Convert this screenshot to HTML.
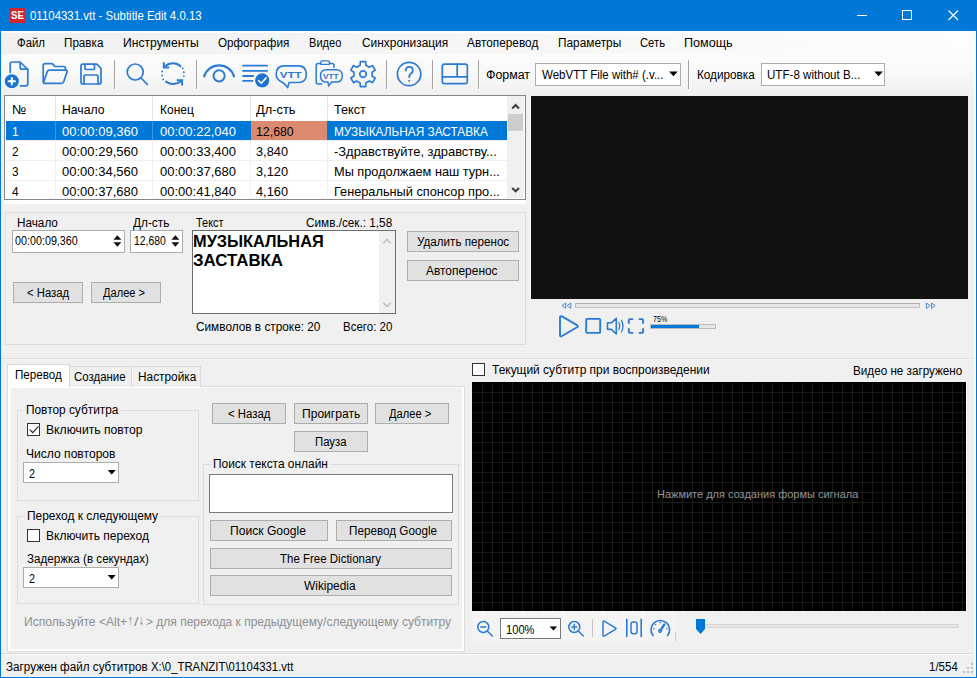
<!DOCTYPE html>
<html lang="ru"><head><meta charset="utf-8"><title>01104331.vtt - Subtitle Edit 4.0.13</title>
<style>
html,body{margin:0;padding:0;}
body{width:977px;height:678px;overflow:hidden;background:#f0f0f0;position:relative;font-family:"Liberation Sans",sans-serif;font-size:12px;color:#000;}
#win div{position:absolute;box-sizing:border-box;}
#win span.t{position:absolute;white-space:nowrap;transform-origin:0 50%;display:block;}
#win svg{position:absolute;overflow:visible;}
.btn{background:#e1e1e1;border:1px solid #adadad;}
.inp{background:#fff;border:1px solid #7a7a7a;}
</style></head><body><div id="win">
<div style="left:0px;top:0px;width:977px;height:678px;background:#f0f0f0;"></div>
<div style="left:0px;top:0px;width:977px;height:31px;background:#0078d7;"></div>
<div style="left:9.5px;top:7.5px;width:15.5px;height:15px;background:#d8232a;border-radius:1px;"></div>
<div style="left:857px;top:15px;width:10px;height:1px;background:#fff;"></div>
<div style="left:902px;top:10px;width:10px;height:10px;border:1px solid #fff;"></div>
<div style="left:1px;top:31px;width:975px;height:2px;background:#fdfdfd;"></div>
<div style="left:1px;top:33px;width:975px;height:21px;background:linear-gradient(90deg,#f0f0f0 0%,#f6f6f6 45%,#fdfdfd 100%);"></div>
<div style="left:1px;top:54px;width:975px;height:41px;background:linear-gradient(#fcfcfc 0%,#f8f8f8 50%,#f0f0f0 100%);"></div>
<div style="left:114px;top:60px;width:1px;height:29px;background:#a2a2a2;"></div>
<div style="left:115px;top:60px;width:1px;height:29px;background:#fdfdfd;"></div>
<div style="left:196px;top:60px;width:1px;height:29px;background:#a2a2a2;"></div>
<div style="left:197px;top:60px;width:1px;height:29px;background:#fdfdfd;"></div>
<div style="left:386px;top:60px;width:1px;height:29px;background:#a2a2a2;"></div>
<div style="left:387px;top:60px;width:1px;height:29px;background:#fdfdfd;"></div>
<div style="left:432px;top:60px;width:1px;height:29px;background:#a2a2a2;"></div>
<div style="left:433px;top:60px;width:1px;height:29px;background:#fdfdfd;"></div>
<div style="left:478px;top:60px;width:1px;height:29px;background:#a2a2a2;"></div>
<div style="left:479px;top:60px;width:1px;height:29px;background:#fdfdfd;"></div>
<div style="left:688px;top:60px;width:1px;height:29px;background:#a2a2a2;"></div>
<div style="left:689px;top:60px;width:1px;height:29px;background:#fdfdfd;"></div>
<div style="left:535px;top:63px;width:146px;height:23px;background:#fff;border:1px solid #adadad;"></div>
<div style="left:761px;top:63px;width:124px;height:23px;background:#fff;border:1px solid #adadad;"></div>
<div style="left:4px;top:95px;width:522px;height:105px;background:#fff;border:1px solid #868686;"></div>
<div style="left:6px;top:96px;width:501px;height:24px;background:#fff;"></div>
<div style="left:55px;top:96px;width:1px;height:24px;background:#e5e5e5;"></div>
<div style="left:55px;top:120px;width:1px;height:77px;background:#f0f0f0;"></div>
<div style="left:152px;top:96px;width:1px;height:24px;background:#e5e5e5;"></div>
<div style="left:152px;top:120px;width:1px;height:77px;background:#f0f0f0;"></div>
<div style="left:250px;top:96px;width:1px;height:24px;background:#e5e5e5;"></div>
<div style="left:250px;top:120px;width:1px;height:77px;background:#f0f0f0;"></div>
<div style="left:327px;top:96px;width:1px;height:24px;background:#e5e5e5;"></div>
<div style="left:327px;top:120px;width:1px;height:77px;background:#f0f0f0;"></div>
<div style="left:6px;top:140px;width:501px;height:1px;background:#f0f0f0;"></div>
<div style="left:6px;top:160px;width:501px;height:1px;background:#f0f0f0;"></div>
<div style="left:6px;top:180px;width:501px;height:1px;background:#f0f0f0;"></div>
<div style="left:6px;top:121px;width:501px;height:19px;background:#0078d7;"></div>
<div style="left:55px;top:121px;width:1px;height:19px;background:#3a93df;"></div>
<div style="left:152px;top:121px;width:1px;height:19px;background:#3a93df;"></div>
<div style="left:251px;top:121px;width:76px;height:19px;background:#dc8a6f;"></div>
<div style="left:5px;top:198px;width:520px;height:1px;background:#fff;"></div>
<div style="left:4px;top:199px;width:522px;height:1px;background:#868686;"></div>
<div style="left:0px;top:200px;width:531px;height:12px;background:#f0f0f0;"></div>
<div style="left:4px;top:200px;width:522px;height:4px;background:#fff;"></div>
<div style="left:507px;top:96px;width:17px;height:102px;background:#f0f0f0;"></div>
<div style="left:508px;top:114px;width:15px;height:17px;background:#cdcdcd;"></div>
<div style="left:530px;top:96px;width:1px;height:203px;background:#fafafa;"></div>
<div style="left:531px;top:96px;width:437px;height:203px;background:#111;"></div>
<div style="left:575px;top:303px;width:345px;height:5px;background:#e6e6e6;border:1px solid #c2c2c2;border-top-color:#b0b0b0;"></div>
<div style="left:650px;top:324px;width:66px;height:5px;background:#e6e6e6;border:1px solid #bcbcbc;"></div>
<div style="left:651px;top:325px;width:48px;height:3px;background:#0078d7;"></div>
<div style="left:5px;top:212px;width:521px;height:133px;border:1px solid #dcdcdc;"></div>
<div style="left:12px;top:230px;width:113px;height:23px;background:#fff;border:1px solid #adadad;"></div>
<div style="left:130px;top:230px;width:53px;height:23px;background:#fff;border:1px solid #adadad;"></div>
<div style="left:192px;top:230px;width:204px;height:84px;background:#fff;border:1px solid #6e6e6e;"></div>
<div style="left:379px;top:231px;width:16px;height:82px;background:#f0f0f0;"></div>
<div style="left:13px;top:282px;width:70px;height:21px;background:#e1e1e1;border:1px solid #adadad;"></div>
<div style="left:91px;top:282px;width:70px;height:21px;background:#e1e1e1;border:1px solid #adadad;"></div>
<div style="left:407px;top:231px;width:112px;height:21px;background:#e1e1e1;border:1px solid #adadad;"></div>
<div style="left:407px;top:260px;width:112px;height:21px;background:#e1e1e1;border:1px solid #adadad;"></div>
<div style="left:1px;top:358px;width:975px;height:1px;background:#dedede;"></div>
<div style="left:1px;top:359px;width:975px;height:1px;background:#f8f8f8;"></div>
<div style="left:7px;top:386px;width:458px;height:266px;border:1px solid #dcdcdc;background:#fff;"></div>
<div style="left:11px;top:388px;width:451px;height:261px;background:#f0f0f0;"></div>
<div style="left:69px;top:366px;width:63px;height:21px;border:1px solid #d9d9d9;border-bottom:none;background:#f0f0f0;"></div>
<div style="left:131px;top:366px;width:70px;height:21px;border:1px solid #d9d9d9;border-bottom:none;background:#f0f0f0;"></div>
<div style="left:7px;top:364px;width:63px;height:23px;border:1px solid #d9d9d9;border-bottom:none;background:#fff;"></div>
<div style="left:17px;top:410px;width:182px;height:91px;border:1px solid #dcdcdc;"></div>
<div style="left:24.3px;top:408px;width:96.4px;height:5px;background:#f0f0f0;"></div>
<div style="left:17px;top:516px;width:182px;height:88px;border:1px solid #dcdcdc;"></div>
<div style="left:24.9px;top:514px;width:135.1px;height:5px;background:#f0f0f0;"></div>
<div style="left:203px;top:464px;width:256px;height:141px;border:1px solid #dcdcdc;"></div>
<div style="left:210.8px;top:462px;width:118.89999999999998px;height:5px;background:#f0f0f0;"></div>
<div style="left:27px;top:423px;width:13px;height:13px;background:#fff;border:1px solid #333;"></div>
<div style="left:23px;top:462px;width:96px;height:21px;background:#fff;border:1px solid #adadad;"></div>
<div style="left:27px;top:529px;width:13px;height:13px;background:#fff;border:1px solid #333;"></div>
<div style="left:23px;top:567px;width:96px;height:21px;background:#fff;border:1px solid #adadad;"></div>
<div style="left:212px;top:403px;width:74px;height:21px;background:#e1e1e1;border:1px solid #adadad;"></div>
<div style="left:294px;top:403px;width:74px;height:21px;background:#e1e1e1;border:1px solid #adadad;"></div>
<div style="left:375px;top:403px;width:74px;height:21px;background:#e1e1e1;border:1px solid #adadad;"></div>
<div style="left:294px;top:431px;width:74px;height:21px;background:#e1e1e1;border:1px solid #adadad;"></div>
<div style="left:209px;top:474px;width:244px;height:39px;background:#fff;border:1px solid #7a7a7a;"></div>
<div style="left:210px;top:520px;width:118px;height:21px;background:#e1e1e1;border:1px solid #adadad;"></div>
<div style="left:336px;top:520px;width:116px;height:21px;background:#e1e1e1;border:1px solid #adadad;"></div>
<div style="left:210px;top:548px;width:242px;height:21px;background:#e1e1e1;border:1px solid #adadad;"></div>
<div style="left:210px;top:575px;width:242px;height:21px;background:#e1e1e1;border:1px solid #adadad;"></div>
<div style="left:472px;top:363px;width:13px;height:13px;background:#fff;border:1px solid #333;"></div>
<div style="left:472px;top:382px;width:494px;height:229px;background-color:#000;background-image:linear-gradient(#191917 1px,transparent 1px),linear-gradient(90deg,#191917 1px,transparent 1px);background-size:10px 10px;background-position:0 0;"></div>
<div style="left:472px;top:382px;width:494px;height:1px;background:#000;"></div>
<div style="left:472px;top:382px;width:1px;height:229px;background:#000;"></div>
<div style="left:966px;top:382px;width:1px;height:229px;background:#fff;"></div>
<div style="left:472px;top:611px;width:204px;height:30px;background:#f4f4f4;"></div>
<div style="left:500px;top:618px;width:61px;height:21px;background:#fff;border:1px solid #7a7a7a;"></div>
<div style="left:592px;top:619px;width:1px;height:18px;background:#c4c4c4;"></div>
<div style="left:675px;top:632px;width:1px;height:9px;background:#c8c8c8;"></div>
<div style="left:704px;top:624px;width:255px;height:4px;background:#e7e7e7;border:1px solid #d6d6d6;"></div>
<div style="left:1px;top:653px;width:975px;height:1px;background:#d7d7d7;"></div>
<div style="left:1px;top:654px;width:975px;height:1px;background:#fff;"></div>
<div style="left:0px;top:0px;width:1px;height:678px;background:#0078d7;"></div>
<div style="left:974px;top:31px;width:2px;height:646px;background:#fbfbfb;"></div>
<div style="left:976px;top:0px;width:1px;height:678px;background:#0078d7;"></div>
<div style="left:0px;top:677px;width:977px;height:1px;background:#0078d7;"></div>
<span class="t" style="left:10.8px;top:7.9px;height:15px;line-height:15px;font-size:10.5px;color:#fff;font-weight:bold;transform:scaleX(0.9133);">SE</span>
<span class="t" style="left:30.3px;top:7.7px;height:17px;line-height:17px;font-size:12px;color:#fff;transform:scaleX(0.9544);">01104331.vtt - Subtitle Edit 4.0.13</span>
<span class="t" style="left:16.7px;top:34.8px;height:17px;line-height:17px;font-size:12px;transform:scaleX(0.9487);">Файл</span>
<span class="t" style="left:64.3px;top:34.8px;height:17px;line-height:17px;font-size:12px;transform:scaleX(0.9717);">Правка</span>
<span class="t" style="left:123.3px;top:34.8px;height:17px;line-height:17px;font-size:12px;transform:scaleX(1.0117);">Инструменты</span>
<span class="t" style="left:218.3px;top:34.8px;height:17px;line-height:17px;font-size:12px;transform:scaleX(0.9706);">Орфография</span>
<span class="t" style="left:309.3px;top:34.8px;height:17px;line-height:17px;font-size:12px;transform:scaleX(0.9241);">Видео</span>
<span class="t" style="left:361.5px;top:34.8px;height:17px;line-height:17px;font-size:12px;transform:scaleX(0.9915);">Синхронизация</span>
<span class="t" style="left:466.7px;top:34.8px;height:17px;line-height:17px;font-size:12px;transform:scaleX(0.9858);">Автоперевод</span>
<span class="t" style="left:557.5px;top:34.8px;height:17px;line-height:17px;font-size:12px;transform:scaleX(0.9880);">Параметры</span>
<span class="t" style="left:640px;top:34.8px;height:17px;line-height:17px;font-size:12px;transform:scaleX(0.9362);">Сеть</span>
<span class="t" style="left:684px;top:34.8px;height:17px;line-height:17px;font-size:12px;transform:scaleX(1.0505);">Помощь</span>
<span class="t" style="left:486px;top:66.9px;height:17px;line-height:17px;font-size:12px;transform:scaleX(1.0319);">Формат</span>
<span class="t" style="left:541.5px;top:66.9px;height:17px;line-height:17px;font-size:12px;transform:scaleX(0.9589);">WebVTT File with# (.v...</span>
<span class="t" style="left:696.7px;top:66.9px;height:17px;line-height:17px;font-size:12px;transform:scaleX(0.9777);">Кодировка</span>
<span class="t" style="left:767.4px;top:66.9px;height:17px;line-height:17px;font-size:12px;transform:scaleX(0.9658);">UTF-8 without B...</span>
<span class="t" style="left:12.4px;top:100.9px;height:18px;line-height:18px;font-size:13px;transform:scaleX(1.0320);">№</span>
<span class="t" style="left:62px;top:100.9px;height:18px;line-height:18px;font-size:13px;transform:scaleX(0.9383);">Начало</span>
<span class="t" style="left:159.7px;top:100.9px;height:18px;line-height:18px;font-size:13px;transform:scaleX(0.9217);">Конец</span>
<span class="t" style="left:256px;top:100.9px;height:18px;line-height:18px;font-size:13px;transform:scaleX(0.9887);">Дл-сть</span>
<span class="t" style="left:333.6px;top:100.9px;height:18px;line-height:18px;font-size:13px;transform:scaleX(0.9745);">Текст</span>
<span class="t" style="left:12.4px;top:122.9px;height:18px;line-height:18px;font-size:13px;color:#fff;transform:scaleX(0.9123);">1</span>
<span class="t" style="left:62px;top:122.9px;height:18px;line-height:18px;font-size:13px;color:#fff;transform:scaleX(1.0012);">00:00:09,360</span>
<span class="t" style="left:159.7px;top:122.9px;height:18px;line-height:18px;font-size:13px;color:#fff;transform:scaleX(1.0012);">00:00:22,040</span>
<span class="t" style="left:256px;top:122.9px;height:18px;line-height:18px;font-size:13px;transform:scaleX(0.9481);">12,680</span>
<span class="t" style="left:333.6px;top:122.9px;height:18px;line-height:18px;font-size:13px;color:#fff;transform:scaleX(0.9101);">МУЗЫКАЛЬНАЯ ЗАСТАВКА</span>
<span class="t" style="left:12.4px;top:142.9px;height:18px;line-height:18px;font-size:13px;transform:scaleX(0.9123);">2</span>
<span class="t" style="left:62px;top:142.9px;height:18px;line-height:18px;font-size:13px;transform:scaleX(1.0012);">00:00:29,560</span>
<span class="t" style="left:159.7px;top:142.9px;height:18px;line-height:18px;font-size:13px;transform:scaleX(1.0012);">00:00:33,400</span>
<span class="t" style="left:256px;top:142.9px;height:18px;line-height:18px;font-size:13px;transform:scaleX(0.9832);">3,840</span>
<span class="t" style="left:333.6px;top:142.9px;height:18px;line-height:18px;font-size:13px;transform:scaleX(0.9946);">-Здравствуйте, здравству...</span>
<span class="t" style="left:12.4px;top:162.9px;height:18px;line-height:18px;font-size:13px;transform:scaleX(0.9123);">3</span>
<span class="t" style="left:62px;top:162.9px;height:18px;line-height:18px;font-size:13px;transform:scaleX(1.0012);">00:00:34,560</span>
<span class="t" style="left:159.7px;top:162.9px;height:18px;line-height:18px;font-size:13px;transform:scaleX(1.0012);">00:00:37,680</span>
<span class="t" style="left:256px;top:162.9px;height:18px;line-height:18px;font-size:13px;transform:scaleX(0.9832);">3,120</span>
<span class="t" style="left:333.6px;top:162.9px;height:18px;line-height:18px;font-size:13px;transform:scaleX(0.9812);">Мы продолжаем наш турн...</span>
<span class="t" style="left:12.4px;top:182.9px;height:18px;line-height:18px;font-size:13px;transform:scaleX(0.9123);">4</span>
<span class="t" style="left:62px;top:182.9px;height:18px;line-height:18px;font-size:13px;transform:scaleX(1.0012);">00:00:37,680</span>
<span class="t" style="left:159.7px;top:182.9px;height:18px;line-height:18px;font-size:13px;transform:scaleX(1.0012);">00:00:41,840</span>
<span class="t" style="left:256px;top:182.9px;height:18px;line-height:18px;font-size:13px;transform:scaleX(0.9832);">4,160</span>
<span class="t" style="left:333.6px;top:182.9px;height:18px;line-height:18px;font-size:13px;transform:scaleX(0.9809);">Генеральный спонсор про...</span>
<span class="t" style="left:653.3px;top:312.5px;height:13px;line-height:13px;font-size:9px;transform:scaleX(0.7882);">75%</span>
<span class="t" style="left:16.6px;top:215.0px;height:17px;line-height:17px;font-size:12px;transform:scaleX(0.9782);">Начало</span>
<span class="t" style="left:15.2px;top:232.9px;height:17px;line-height:17px;font-size:12px;transform:scaleX(0.8961);">00:00:09,360</span>
<span class="t" style="left:133px;top:215.0px;height:17px;line-height:17px;font-size:12px;transform:scaleX(0.9844);">Дл-сть</span>
<span class="t" style="left:134px;top:232.9px;height:17px;line-height:17px;font-size:12px;transform:scaleX(0.8637);">12,680</span>
<span class="t" style="left:195.6px;top:215.0px;height:17px;line-height:17px;font-size:12px;transform:scaleX(0.9133);">Текст</span>
<span class="t" style="left:306.4px;top:215.2px;height:17px;line-height:17px;font-size:12px;transform:scaleX(0.9801);">Симв./сек.: 1,58</span>
<span class="t" style="left:193.4px;top:229.7px;height:23px;line-height:23px;font-size:16.5px;font-weight:bold;transform:scaleX(0.9922);">МУЗЫКАЛЬНАЯ</span>
<span class="t" style="left:193.4px;top:248.9px;height:23px;line-height:23px;font-size:16.5px;font-weight:bold;transform:scaleX(1.0202);">ЗАСТАВКА</span>
<span class="t" style="left:195.6px;top:319.4px;height:17px;line-height:17px;font-size:12px;transform:scaleX(0.9840);">Символов в строке: 20</span>
<span class="t" style="left:343.2px;top:319.4px;height:17px;line-height:17px;font-size:12px;transform:scaleX(0.9595);">Всего: 20</span>
<span class="t" style="left:26.8px;top:284.7px;height:17px;line-height:17px;font-size:12px;transform:scaleX(0.9433);">&lt; Назад</span>
<span class="t" style="left:103px;top:284.7px;height:17px;line-height:17px;font-size:12px;transform:scaleX(0.9231);">Далее &gt;</span>
<span class="t" style="left:416.5px;top:233.7px;height:17px;line-height:17px;font-size:12px;transform:scaleX(0.9708);">Удалить перенос</span>
<span class="t" style="left:426px;top:262.7px;height:17px;line-height:17px;font-size:12px;transform:scaleX(0.9947);">Автоперенос</span>
<span class="t" style="left:15.2px;top:367.2px;height:17px;line-height:17px;font-size:12px;transform:scaleX(0.9687);">Перевод</span>
<span class="t" style="left:74.4px;top:368.7px;height:17px;line-height:17px;font-size:12px;transform:scaleX(0.9533);">Создание</span>
<span class="t" style="left:138.3px;top:368.7px;height:17px;line-height:17px;font-size:12px;transform:scaleX(0.9868);">Настройка</span>
<span class="t" style="left:26.3px;top:401.9px;height:17px;line-height:17px;font-size:12px;transform:scaleX(0.9881);">Повтор субтитра</span>
<span class="t" style="left:26.9px;top:507.9px;height:17px;line-height:17px;font-size:12px;transform:scaleX(0.9947);">Переход к следующему</span>
<span class="t" style="left:212.8px;top:455.9px;height:17px;line-height:17px;font-size:12px;transform:scaleX(0.9932);">Поиск текста онлайн</span>
<span class="t" style="left:46px;top:422.0px;height:17px;line-height:17px;font-size:12px;transform:scaleX(1.0141);">Включить повтор</span>
<span class="t" style="left:26px;top:446.0px;height:17px;line-height:17px;font-size:12px;transform:scaleX(1.0069);">Число повторов</span>
<span class="t" style="left:29px;top:465.9px;height:17px;line-height:17px;font-size:12px;transform:scaleX(0.8972);">2</span>
<span class="t" style="left:46.3px;top:528.1px;height:17px;line-height:17px;font-size:12px;transform:scaleX(1.0019);">Включить переход</span>
<span class="t" style="left:26.9px;top:551.2px;height:17px;line-height:17px;font-size:12px;transform:scaleX(0.9691);">Задержка (в секундах)</span>
<span class="t" style="left:29px;top:570.9px;height:17px;line-height:17px;font-size:12px;transform:scaleX(0.8972);">2</span>
<span class="t" style="left:228px;top:405.7px;height:17px;line-height:17px;font-size:12px;transform:scaleX(0.9478);">&lt; Назад</span>
<span class="t" style="left:301.6px;top:405.7px;height:17px;line-height:17px;font-size:12px;transform:scaleX(1.0053);">Проиграть</span>
<span class="t" style="left:389.3px;top:405.7px;height:17px;line-height:17px;font-size:12px;transform:scaleX(0.9275);">Далее &gt;</span>
<span class="t" style="left:314.5px;top:433.7px;height:17px;line-height:17px;font-size:12px;transform:scaleX(0.9447);">Пауза</span>
<span class="t" style="left:230.3px;top:522.7px;height:17px;line-height:17px;font-size:12px;transform:scaleX(1.0082);">Поиск Google</span>
<span class="t" style="left:349.2px;top:522.7px;height:17px;line-height:17px;font-size:12px;transform:scaleX(0.9742);">Перевод Google</span>
<span class="t" style="left:280.4px;top:550.7px;height:17px;line-height:17px;font-size:12px;transform:scaleX(0.9575);">The Free Dictionary</span>
<span class="t" style="left:303.9px;top:577.7px;height:17px;line-height:17px;font-size:12px;transform:scaleX(0.9917);">Wikipedia</span>
<span class="t" style="left:24.4px;top:613.9px;height:17px;line-height:17px;font-size:12px;color:#8f8f8f;transform:scaleX(1.0093);">Используйте &lt;Alt+</span>
<span class="t" style="left:128.4px;top:613.5px;height:15px;line-height:15px;font-size:11px;color:#8f8f8f;font-family:'DejaVu Sans',sans-serif;transform:scaleX(0.5207);">↑</span>
<span class="t" style="left:133.6px;top:613.9px;height:17px;line-height:17px;font-size:12px;color:#8f8f8f;transform:scaleX(1.3757);">/</span>
<span class="t" style="left:138.8px;top:613.5px;height:15px;line-height:15px;font-size:11px;color:#8f8f8f;font-family:'DejaVu Sans',sans-serif;transform:scaleX(0.5207);">↓</span>
<span class="t" style="left:145.6px;top:613.9px;height:17px;line-height:17px;font-size:12px;color:#8f8f8f;transform:scaleX(0.9989);">&gt; для перехода к предыдущему/следующему субтитру</span>
<span class="t" style="left:492px;top:362.2px;height:17px;line-height:17px;font-size:12px;transform:scaleX(0.9955);">Текущий субтитр при воспроизведении</span>
<span class="t" style="left:852.5px;top:362.6px;height:17px;line-height:17px;font-size:12px;transform:scaleX(0.9736);">Видео не загружено</span>
<span class="t" style="left:656.7px;top:487.3px;height:15px;line-height:15px;font-size:11px;color:#949494;transform:scaleX(0.9992);">Нажмите для создания формы сигнала</span>
<span class="t" style="left:506.2px;top:621.7px;height:17px;line-height:17px;font-size:12px;transform:scaleX(0.9282);">100%</span>
<span class="t" style="left:5.5px;top:658.7px;height:17px;line-height:17px;font-size:12px;transform:scaleX(0.9728);">Загружен файл субтитров</span>
<span class="t" style="left:151.3px;top:658.7px;height:17px;line-height:17px;font-size:12px;transform:scaleX(0.9454);">X:\0_TRANZIT\01104331.vtt</span>
<span class="t" style="left:928.8px;top:658.7px;height:17px;line-height:17px;font-size:12px;transform:scaleX(0.9590);">1/554</span>
<svg width="977" height="678" viewBox="0 0 977 678" style="left:0;top:0">
<path d="M948.5 10.5l9.5 9.5M958 10.5l-9.5 9.5" stroke="#fff" stroke-width="1.1" fill="none"/>
<g fill="none" stroke="#2c7bd4" stroke-width="1.7" stroke-linecap="round" stroke-linejoin="round">
<path d="M10.2 72.8V64q0-2 2-2h7.8l7.8 7.4V83.8q0 2-2 2H20.5"/><path d="M20.2 62.3v5.2q0 1.7 1.7 1.7h5.6"/>
<g transform="translate(0,-0.6)"><path d="M43.2 82V66.2q0-2 2-2h6.2q1 0 1.7.8l1.8 2.1h8.6q2 0 2 2v1.5"/><path d="M43.4 83.2l3.8-10.9q.6-1.6 2.2-1.6h16.1q2.2 0 1.5 2l-3.3 9.6q-.6 1.6-2.3 1.6H45q-2 0-1.6-1.3z"/></g>
<path d="M83 64.2h13.2q.8 0 1.4.6l2.8 2.8q.6.6.6 1.4V82q0 2-2 2H83q-2 0-2-2V66.2q0-2 2-2z"/><path d="M85 64.5v4q0 1 1 1h7.5q1 0 1-1v-4"/><path d="M84 83.8v-7.5q0-1.3 1.3-1.3h11.4q1.3 0 1.3 1.3v7.5"/>
<circle cx="135.2" cy="72" r="8"/><path d="M141 78l6.3 6.3"/>
<path d="M165.2 66A11.6 11.6 0 0 1 180.6 66.2" stroke-width="2"/><path d="M163.8 62.3V67.6H169.2" stroke-width="2" stroke-linecap="butt" stroke-linejoin="miter"/><path d="M181 81.3A12.1 12.1 0 0 1 166 81.6" stroke-width="2"/><path d="M182.1 85.4V80.2H176.7" stroke-width="2" stroke-linecap="butt" stroke-linejoin="miter"/>
<path d="M162.1 71.5v0M162.1 75.5v0M163.2 79.4v0M182.7 68.4v0M183.9 72.3v0M183.9 76.1v0" stroke-width="1.9"/>
<path d="M204.2 76.4A15.55 15.55 0 0 1 234 76.4" stroke-width="2.2"/><circle cx="219.1" cy="75.8" r="5.6" stroke-width="2"/>
<path d="M243 65.7h24.2M243 70.8h24.2M243 76h10.2M243 80.8h9.6" stroke-width="1.8"/>
<path d="M284.3 65.9h13.9q8.1 0 8.1 8.3t-8.1 8.3h-9.2l-1.3 5.1q-2.6-4.3-7.6-6.6-3.9-2.2-3.9-6.8 0-8.3 8.1-8.3z" stroke-width="1.6"/>
<path d="M320.2 63.4h-2q-2 0-2 2V82q0 2 2 2h3.5" stroke-width="1.5"/><path d="M330 63.4h2q2 0 2 2v2" stroke-width="1.5"/><path d="M320.8 64.4v-2.2q0-1.3 1.3-1.3h6q1.3 0 1.3 1.3v2.2z" stroke-width="1.4"/>
<path d="M326.5 69.8h9.8q6 0 6 6.1t-6 6.1h-4.6l-3.2 4-.5-4h-1.5q-6 0-6-6.1t6-6.1z" stroke-width="1.4" fill="#f6f6f6"/>
<path d="M360.34 61.58 L365.66 61.58 L365.87 65.26 L369.22 67.19 L372.51 65.54 L375.17 70.14 L372.10 72.17 L372.10 76.03 L375.17 78.06 L372.51 82.66 L369.22 81.01 L365.87 82.94 L365.66 86.62 L360.34 86.62 L360.13 82.94 L356.78 81.01 L353.49 82.66 L350.83 78.06 L353.90 76.03 L353.90 72.17 L350.83 70.14 L353.49 65.54 L356.78 67.19 L360.13 65.26z" stroke-width="1.7" stroke-linejoin="round"/><circle cx="363" cy="74.1" r="3.3"/>
<circle cx="409.1" cy="74" r="11.7"/><path d="M405.8 70.6q0-3.7 3.5-3.7t3.5 3.5q0 2-1.8 3.2t-1.8 3.4" stroke-width="1.8"/><path d="M409.2 80.7v.1" stroke-width="2"/>
<rect x="442.3" y="64.1" width="25" height="19.6" rx="2.2"/><path d="M442.3 76.9h25M457.2 64.1v12.8"/>
<path d="M560 318.2v16.6q0 2.4 2 1.2l15-8.7q1.8-1.1 0-2.2L562 316.4q-2-1.1-2 1.8z" stroke-width="1.9"/>
<rect x="586.2" y="318.9" width="14" height="14" rx="0.8" stroke-width="1.9"/>
<path d="M607.5 322.8h3.8l5-4.5v15.6l-5-4.5h-3.8z" stroke-width="1.6"/><path d="M619 322.7q1.6 3.4 0 6.8M621.5 320.4q3 5.7 0 11.4" stroke-width="1.3"/>
<path d="M628.8 323v-2.8q0-1.1 1.1-1.1h2.6M639.4 319.1h2.6q1.1 0 1.1 1.1v2.8M643.1 329v2.8q0 1.1-1.1 1.1h-2.6M632.5 332.9h-2.6q-1.1 0-1.1-1.1v-2.8" stroke-width="1.9"/>
<path d="M565.7 303.4v5l-3.4-2.5zM570.8 303.4v5l-3.4-2.5zM926.4 303.4v5l3.4-2.5zM931.5 303.4v5l3.4-2.5z" stroke-width="0.9" stroke="#3a80d2"/>
<circle cx="483.3" cy="627" r="5.5" stroke-width="1.5"/><path d="M487.5 631.2l4.8 4.8M480.8 627h5" stroke-width="1.5"/>
<circle cx="574.3" cy="627" r="5.5" stroke-width="1.5"/><path d="M578.5 631.2l4.8 4.8M571.8 627h5M574.3 624.5v5" stroke-width="1.5"/>
<path d="M603 622.3v12.6q0 1.8 1.6.9l10.8-6.4q1.4-.8 0-1.6L604.6 621.4q-1.6-.9-1.6.9z" stroke-width="1.5"/>
<path d="M626.8 619.4v17M641.2 619.4v17" stroke-width="1.6"/><rect x="631" y="622" width="6" height="11.8" rx="2.2" stroke-width="1.5"/>
<path d="M653 635.5A9.3 9.3 0 1 1 667.6 635.5" stroke-width="1.6"/><path d="M660.5 630.3l3.8-5.8" stroke-width="2.3"/><circle cx="660.1" cy="630.9" r="1.4" stroke-width="1.3"/><path d="M653.8 628.7h.1M655.5 624.5h.1M660.3 622.6h.1M666.8 628.7h.1" stroke-width="1.5"/>
</g>
<circle cx="11.8" cy="81.2" r="7.6" fill="#1b75d0" stroke="#f6f6f6" stroke-width="1.2"/><path d="M11.8 78v6.4M8.6 81.2h6.4" stroke="#fff" stroke-width="2" stroke-linecap="round" fill="none"/>
<circle cx="262.2" cy="80.4" r="7.7" fill="#1b75d0" stroke="#f6f6f6" stroke-width="1.2"/><path d="M258.7 80.6l2.6 2.6 4.8-5.3" stroke="#fff" stroke-width="1.6" stroke-linecap="round" stroke-linejoin="round" fill="none"/>
<text x="290.7" y="78" font-family="Liberation Sans, sans-serif" font-weight="bold" font-size="9.9" fill="#2c7bd4" text-anchor="middle" textLength="22" lengthAdjust="spacingAndGlyphs">VTT</text>
<text x="330.8" y="78.7" font-family="Liberation Sans, sans-serif" font-weight="bold" font-size="7.5" fill="#2c7bd4" text-anchor="middle" textLength="15.6" lengthAdjust="spacingAndGlyphs">VTT</text>
<path d="M669.1 71.39999999999999h8.6l-4.3 4.8zM874.3000000000001 71.39999999999999h8.6l-4.3 4.8zM107.7 470.1h8l-4.0 4.4zM107.7 575.0999999999999h8l-4.0 4.4zM549.65 626.4h7.5l-3.75 4.2z" fill="#000"/>
<path d="M113.4 239.8h8l-4-4.6zM113.4 242.2h8l-4 4.6zM171.4 239.8h8l-4-4.6zM171.4 242.2h8l-4 4.6z" fill="#111"/>
<path d="M512.2 108.4l3.4-3.4 3.4 3.4M512.2 187.9l3.4 3.4 3.4-3.4" stroke="#404040" stroke-width="2.1" fill="none"/>
<path d="M383.3 243.2l3.7-3.7 3.7 3.7M383.3 302.7l3.7 3.7 3.7-3.7" stroke="#c0c0c0" stroke-width="1.6" fill="none"/>
<path d="M29.8 429.6l3 3 5.6-6.2" stroke="#222" stroke-width="1.2" fill="none"/>
<path d="M696 619h9v10l-4.5 5-4.5-5z" fill="#0078d7"/>
<path d="M971 663h2v2h-2zM971 667h2v2h-2zM967 667h2v2h-2zM971 671h2v2h-2zM967 671h2v2h-2zM963 671h2v2h-2z" fill="#bfbfbf"/>
</svg>
</div></body></html>
